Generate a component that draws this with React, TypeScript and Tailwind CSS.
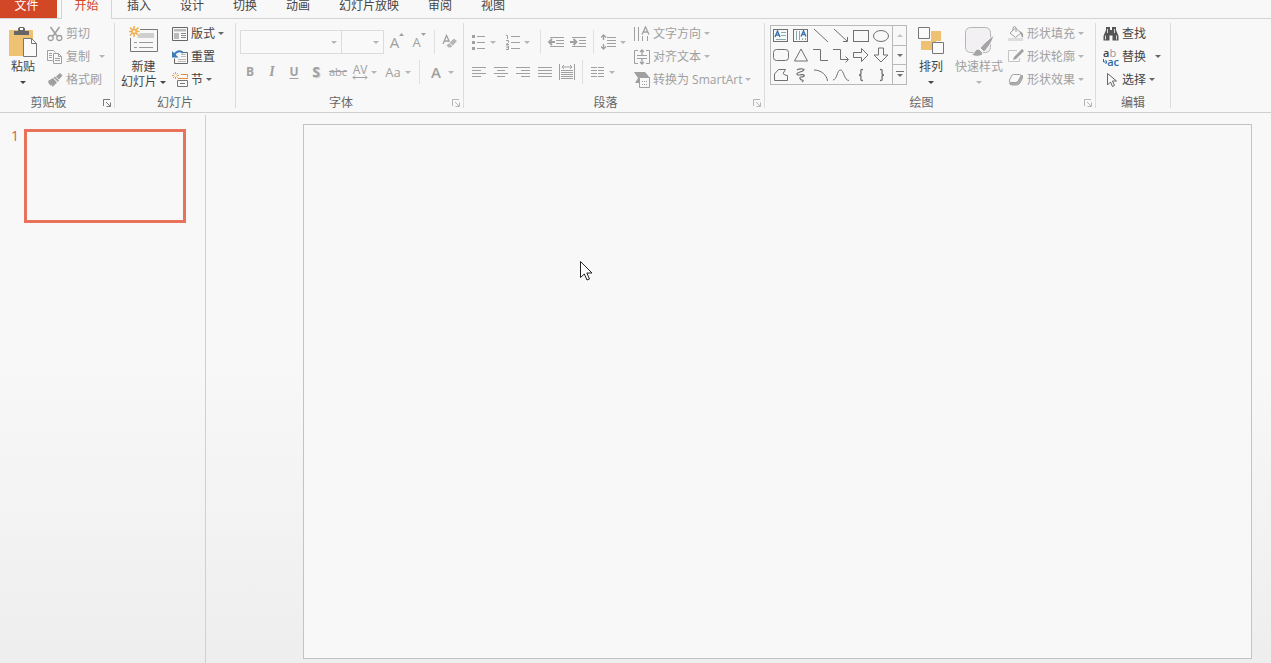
import type { ReactNode } from "react";

const tabs = ["插入", "设计", "切换", "动画", "幻灯片放映", "审阅", "视图"];

type IconProps = { w?: number; h?: number; children: ReactNode };

function Icon({ w = 16, h = 16, children }: IconProps) {
    return (
        <svg
            width={w}
            height={h}
            viewBox={`0 0 ${w} ${h}`}
            fill="none"
            stroke="currentColor"
            className="shrink-0"
            aria-hidden="true"
        >
            {children}
        </svg>
    );
}

function Caret() {
    return (
        <svg width="6" height="3" viewBox="0 0 6 3" className="shrink-0" fill="currentColor" aria-hidden="true">
            <path d="M0 0h6L3 3z" />
        </svg>
    );
}

function Separator() {
    return <div className="mx-1 h-6 w-px bg-[#e0e0e0]" />;
}

/* Ribbon group: controls on top, caption underneath, divider on the right */
function Group({ label, className, launcher, dim, children }: {
    label: string;
    className: string;
    launcher?: boolean;
    dim?: boolean;
    children: ReactNode;
}) {
    return (
        <section aria-label={label} className={`flex shrink-0 ${className}`}>
            <div className="flex min-w-0 flex-1 flex-col pt-[3px]">
                <div className="flex h-[69px] items-start">{children}</div>
                <div className="flex h-5 items-center text-[#666]">
                    <span className={`flex-1 pt-1 text-center ${launcher ? "pr-1.5" : ""}`}>{label}</span>
                    {launcher && (
                        <button aria-label={`${label}设置`} className={`mr-[3px] pt-1 ${dim ? "text-[#b5b5b5]" : "text-[#777]"}`}>
                            <Icon w={8} h={8}>
                                <path d="M.5 7V.5H7M3 3l4 4M7.5 3.5v4h-4" />
                            </Icon>
                        </button>
                    )}
                </div>
            </div>
            <div className="my-1 w-px bg-[#dcdcdc]" />
        </section>
    );
}

function SmallButton({ icon, label, caret, dim, split }: {
    icon: ReactNode;
    label: string;
    caret?: boolean;
    dim?: boolean;
    split?: boolean;
}) {
    return (
        <button className={`flex h-[23px] items-center gap-[3px] whitespace-nowrap ${dim ? "text-[#a0a0a0]" : "text-[#444]"}`}>
            {icon}
            <span>{label}</span>
            {caret && (
                <span className={`${split ? "pl-1.5" : ""} ${dim ? "text-[#b5b5b5]" : "text-[#666]"}`}>
                    <Caret />
                </span>
            )}
        </button>
    );
}

function BigButton({ icon, label, second, dim, className }: {
    icon: ReactNode;
    label: string;
    second?: string;
    dim?: boolean;
    className: string;
}) {
    return (
        <button className={`flex shrink-0 flex-col items-center pt-1 ${dim ? "text-[#a0a0a0]" : "text-[#444]"} ${className}`}>
            <span className="flex h-[33px] items-start">{icon}</span>
            <span className="leading-4 whitespace-nowrap">{label}</span>
            <span className={`flex h-3.5 items-center gap-[3px] leading-[14px] whitespace-nowrap ${dim ? "text-[#b5b5b5]" : ""}`}>
                {second}
                <Caret />
            </span>
        </button>
    );
}

function ToolButton({ label, caret, wide, children }: {
    label: string;
    caret?: boolean;
    wide?: boolean;
    children: ReactNode;
}) {
    return (
        <button aria-label={label} className="flex h-6 items-center text-[#a0a0a0]">
            <span className={`flex justify-center ${wide ? "w-6" : "w-[22px]"}`}>{children}</span>
            {caret && (
                <span className="flex w-2.5 text-[#b5b5b5]">
                    <Caret />
                </span>
            )}
        </button>
    );
}

function Combo({ label, className }: { label: string; className: string }) {
    return (
        <div className={`relative h-6 ${className}`}>
            <select aria-label={label} className="h-full w-full appearance-none border border-[#dcdcdc] bg-[#f9f9f9]">
                <option></option>
            </select>
            <span className="pointer-events-none absolute top-2.5 right-[5px] flex h-1 items-center text-[#b5b5b5]">
                <Caret />
            </span>
        </div>
    );
}

const star = "M5 0v3M5 7v3M0 5h3M7 5h3M1.5 1.5l2 2M6.5 6.5l2 2M8.5 1.5l-2 2M3.5 6.5l-2 2";

const PasteIcon = (
    <Icon w={30} h={32}>
        <rect x="1" y="4" width="24" height="26" fill="#eec272" stroke="none" />
        <path d="M6 9V5h4V2.5L11.500 1h4L17 2.500V5h4v4z" fill="#666" stroke="none" />
        <rect x="12" y="2" width="3" height="2" fill="#fff" stroke="none" />
        <path d="M15.500 12.500h8l5 5v13h-13z" fill="#fafafa" stroke="#777" />
        <path d="M23.500 12.500v5h5" stroke="#777" />
    </Icon>
);
const CutIcon = (
    <Icon>
        <path d="M3.500 1l6.500 9M12.500 1L6 10" strokeWidth="1.600" />
        <circle cx="3.700" cy="12" r="2.500" strokeWidth="1.300" />
        <circle cx="12.300" cy="12" r="2.500" strokeWidth="1.300" />
    </Icon>
);
const CopyIcon = (
    <Icon>
        <path d="M5.500 11.500h-5v-10h6l2 2" />
        <path d="M6.500 4.500h5l3 3v7h-8zM11.500 4.500v3h3M2 4.500h3M2 6.500h3M2 8.500h3M8 9.500h5M8 11.500h5" />
    </Icon>
);
const PainterIcon = (
    <Icon>
        <g fill="currentColor" stroke="none">
            <path d="M13 1l2.500 2.500-3.500 4-3-3z" />
            <path d="M8 4.500l4 4-1 1.500-4.500-4.500z" />
            <path d="M6 6l4 4.500L5.500 15l-.5-2-1.500 1-.5-2-1 .5L1 9z" />
        </g>
    </Icon>
);
const NewSlideIcon = (
    <Icon w={30} h={28}>
        <path d="M11 3.500h17.500v22h-27V12" stroke="#777" />
        <path d="M11 7h14v5H8z" fill="#cfcfcf" stroke="none" />
        <path d="M5 16.500h3M10 16.500h14M5 21.500h3M10 21.500h14" stroke="#999" />
        <g stroke="#f0b050" strokeWidth="1.600">
            <path d="M5 0v3M5 8v3M0 5.500h3M7.500 5.500h3M1 1.500l2.500 2.500M7 7l2.500 2.500M9.500 1.500L7 4M3.500 7L1 9.500" />
            <circle cx="5.200" cy="5.500" r="2" />
        </g>
    </Icon>
);
const LayoutIcon = (
    <Icon>
        <path d="M.5 1.500h15v13H.5z" stroke="#666" />
        <path d="M2 3h12v2.500H2zM2 7h5v6H2z" fill="#bbb" stroke="none" />
        <path d="M9 7.500h5M9 9.500h5M9 11.500h5" stroke="#888" />
    </Icon>
);
const ResetIcon = (
    <Icon>
        <path d="M11 3.500h4.500v11h-13v-5" stroke="#666" />
        <path d="M9 5.500h5M9 7.500h5M6 10.500h8M6 12.500h8" stroke="#bbb" />
        <path d="M2 6.500c1.500-4 6-6 9-2.500" stroke="#3b7bb8" strokeWidth="2" />
        <path d="M0 2v6.500h6.500z" fill="#3b7bb8" stroke="none" />
    </Icon>
);
const SectionIcon = (
    <Icon>
        <g transform="scale(.7)" stroke="#eda04a" strokeWidth="1.400">
            <path d={star} />
        </g>
        <path d="M9 2.500h6.500v3M6 6.500h10" stroke="#e98a3a" />
        <path d="M5.500 8.500h10v6h-10zM8 11.500h5" stroke="#777" />
    </Icon>
);
const ClearIcon = (
    <Icon>
        <path d="M1 10L4.500 1.500 8 9M2.500 7h4" strokeWidth="1.300" />
        <path d="M12 4l3.500 3-6.500 7H6.500L4 11.500z" fill="#b5b5b5" stroke="#f8f8f8" />
        <path d="M7 8.500l3.500 3.500" stroke="#f8f8f8" />
    </Icon>
);
const BulletsIcon = (
    <Icon>
        <path d="M6 2.500h8M6 8.500h8M6 14.500h8" />
        <path d="M1 1h3v3H1zM1 7h3v3H1zM1 13h3v3H1z" fill="currentColor" stroke="none" />
    </Icon>
);
const NumbersIcon = (
    <Icon>
        <path d="M6 2.500h9M6 8.500h9M6 14.500h9" />
        <path d="M1 1.500h1.500V5M1 6.500h2.500v2L1 10.500h3M1 12h2.500v3.500H1M1.500 13.700h2" />
    </Icon>
);
const OutdentIcon = (
    <Icon w={18} h={14}>
        <path d="M3 2.500h14M9 5.500h8M9 8.500h8M3 11.500h14" />
        <path d="M2 7h6M5 4L2 7l3 3" strokeWidth="1.800" />
    </Icon>
);
const IndentIcon = (
    <Icon w={18} h={14}>
        <path d="M3 2.500h14M10 5.500h7M10 8.500h7M3 11.500h14" />
        <path d="M1 7h6M4.500 4l3 3-3 3" strokeWidth="1.800" />
    </Icon>
);
const SpacingIcon = (
    <Icon>
        <path d="M6 3.500h9M6 6.500h9M6 9.500h9M6 12.500h9" />
        <path d="M2.500 1v5M0 3.500L2.500 1 5 3.500M2.500 10v5M0 12.500L2.500 15 5 12.500" strokeWidth="1.400" />
    </Icon>
);

const aligns = [
    { label: "左对齐", d: "M1 2.500h14M1 5.500h9M1 8.500h14M1 11.500h9" },
    { label: "居中", d: "M1 2.500h14M4 5.500h8M1 8.500h14M4 11.500h8" },
    { label: "右对齐", d: "M1 2.500h14M6 5.500h9M1 8.500h14M6 11.500h9" },
    { label: "两端对齐", d: "M1 2.500h14M1 5.500h14M1 8.500h14M1 11.500h14" },
];

const DistributeIcon = (
    <Icon>
        <path d="M.5 0v16M15.500 0v16M2 6.500h12M2 8.500h12M2 10.500h12M2 12.500h12M2 14.500h12" />
        <path d="M3 3h10M5 1L3 3l2 2M11 1l2 2-2 2" />
    </Icon>
);
const ColumnsIcon = (
    <Icon w={16} h={14}>
        <path d="M1 2.500h6M1 5.500h6M1 8.500h6M1 11.500h6M8 2.500h6M8 5.500h6M8 8.500h6M8 11.500h6" />
    </Icon>
);
const DirectionIcon = (
    <Icon>
        <path d="M.5 1v14M4.500 1v14M8.500 10v5M13.500 10v5" />
        <path d="M8 8.500L11.500 1 15 8.500M9.500 6h4" strokeWidth="1.300" />
    </Icon>
);
const AlignTextIcon = (
    <Icon>
        <path d="M4 1.500H.5v13H4M12 1.500h3.500v13H12M3 6.500h10M3 9.500h10" />
        <path d="M8 1v5M6 3l2-2 2 2M8 10v5M6 13l2 2 2-2" strokeWidth="1.300" />
    </Icon>
);
const SmartArtIcon = (
    <Icon>
        <path d="M0 0h11l4 4.500-1 1H5V11H1l3-5z" fill="currentColor" stroke="none" />
        <path d="M5.500 5.500h10v10h-10zM8 9.500h1M10 9.500h1M12 9.500h1M8 12.500h1M10 12.500h1M12 12.500h1" fill="#f8f8f8" />
    </Icon>
);

const shapes = [
    { label: "文本框", art: <><rect x="1.500" y="2.500" width="14" height="12" /><path d="M3 10l2.500-6L8 10M4 8h3" stroke="#3f76ad" strokeWidth="1.400" /><path d="M9 5.500h5M9 8.500h5M4 12.500h10" stroke="#8aa" /></> },
    { label: "竖排文本框", art: <><rect x="1.500" y="2.500" width="14" height="12" /><path d="M9 9.500L11.500 4 14 9.500M10 7.500h3" stroke="#3f76ad" strokeWidth="1.400" /><path d="M4.500 4v9M7.500 4v9M10.500 11v2M13.500 11v2" stroke="#8aa" /></> },
    { label: "直线", art: <path d="M2 2l14 13" /> },
    { label: "箭头", art: <path d="M2 2l13 12M15.500 10v4.500H11" /> },
    { label: "矩形", art: <rect x="1.500" y="3.500" width="15" height="11" /> },
    { label: "椭圆", art: <ellipse cx="9" cy="9" rx="7.500" ry="5.500" /> },
    { label: "圆角矩形", art: <rect x="1.500" y="3.500" width="15" height="11" rx="3" /> },
    { label: "三角形", art: <path d="M9 3l6.500 12h-13z" /> },
    { label: "肘形连接符", art: <path d="M1 3.500h7.500v11H16" /> },
    { label: "肘形箭头", art: <path d="M1 3.500h7.500v10H16M13.500 10.500l3 3-3 3" /> },
    { label: "右箭头", art: <path d="M1.500 6.500h8v-4L16 9l-6.500 6.500v-4h-8z" /> },
    { label: "下箭头", art: <path d="M6.500 2h5v7h4.500L9 16 2 9h4.500z" /> },
    { label: "任意多边形", art: <path d="M6.500 3.500h7l-2.500 4 2 1.500 2.500.5v5h-13V8z" /> },
    { label: "自由曲线", art: <path d="M5 4c3-2 4-1 6-1s1 2-3 3-4 3-1 3 4-1 5 0-1 2-3 2-1 3 1 3 1 1 0 2" strokeWidth="1.200" /> },
    { label: "弧形", art: <path d="M2 4c7 0 13 5 13.500 11" /> },
    { label: "曲线", art: <path d="M1 14c4 0 4-10 7.500-10S12 14.500 17 14.500" /> },
    { label: "左大括号", art: <path d="M11 3.500c-3 0-2 1-2 3.500 0 1-.5 2-2 2 1.500 0 2 1 2 2 0 2.500-1 3.500 2 3.500" strokeWidth="1.300" /> },
    { label: "右大括号", art: <path d="M8 3.500c3 0 2 1 2 3.500 0 1 .5 2 2 2-1.500 0-2 1-2 2 0 2.500 1 3.500-2 3.500" strokeWidth="1.300" /> },
];

const ArrangeIcon = (
    <Icon w={28} h={30}>
        <path d="M14 5h10v10h-5v9H4v-9h10z" fill="#eec272" stroke="none" />
        <path d="M1.500 1.500h11v11h-11zM15.500 16.500h11v11h-11z" fill="#fafafa" stroke="#777" />
    </Icon>
);
const StylesIcon = (
    <Icon w={30} h={32}>
        <rect x="1.500" y="1.500" width="25" height="25" rx="5" fill="#f2f0f3" stroke="#b5b5b5" />
        <path d="M30 9c-5 4-11 9-14 13l4 4c5-5 9-12 10-17z" fill="#a5a5a5" stroke="#f8f8f8" />
        <path d="M15 23l4 4c-1 4-7 4-12 2 4-1 3-6 8-6z" fill="#a5a5a5" stroke="#f8f8f8" />
    </Icon>
);
const FillIcon = (
    <Icon>
        <path d="M2 7L7.500 2l5.500 5-5.500 4.500zM5 4.500V1.500Q6.500-.5 8 1.500V6" />
        <path d="M12 5q4 2 3 6-1 1-1.500-.5z" fill="currentColor" stroke="none" />
        <path d="M0 13.500h15" stroke="#ddd" strokeWidth="3" />
    </Icon>
);
const OutlineIcon = (
    <Icon>
        <path d="M11.500 9v3.500H.5v-11H9" stroke="#c4c4c4" />
        <path d="M14 0l2 2-8 8-3 1 1-3z" fill="currentColor" stroke="none" />
    </Icon>
);
const EffectsIcon = (
    <Icon>
        <path d="M5.500 2.500h6q2 0 1 2l-2 4q-1 2-3 2H3q-2.500 0-1.500-2.500l1.500-3q.5-2.500 2.500-2.500z" />
        <path d="M14 3q1 2 0 4l-2 4q-1 2-4 2H4q-2 0-2.500-2H7q3 0 4-3z" fill="#b0b0b0" />
    </Icon>
);
const FindIcon = (
    <Icon>
        <path d="M3 1h4v3h2V1h4v3l2.500 6v4.500h-6v-5h-3v5h-6V10L3 4z" fill="#555" stroke="none" />
        <path d="M2.500 9.500v4M4.500 3v4M11.500 3v4M13.500 9.500v4" stroke="#d8d8d8" />
    </Icon>
);
const ReplaceIcon = (
    <span className="flex w-4 shrink-0 flex-col text-left text-[11px] leading-[9px] font-semibold" aria-hidden="true">
        <span>a<span className="font-normal text-[#999]">b</span></span>
        <span className="flex items-center justify-end text-[#2f6cab]">
            <svg width="4" height="5" viewBox="0 0 4 5" fill="none" stroke="currentColor" className="shrink-0">
                <path d="M.5 0v3H4M2.500 1L4 3 2.500 5" />
            </svg>
            <span>ac</span>
        </span>
    </span>
);
const SelectIcon = (
    <Icon>
        <path d="M4.500 1.500v11.500l3-3 2 4.500 2-1-2-4.500h4z" stroke="#666" />
    </Icon>
);

function Ribbon() {
    return (
        <div className="flex h-[94px] border-b border-[#cfcfcf] text-xs leading-4">
            <Group label="剪贴板" launcher className="w-[115px]">
                <BigButton icon={PasteIcon} label="粘贴" className="w-[46px]" />
                <div className="flex flex-col pl-px">
                    <SmallButton icon={CutIcon} label="剪切" dim />
                    <SmallButton icon={CopyIcon} label="复制" dim caret split />
                    <SmallButton icon={PainterIcon} label="格式刷" dim />
                </div>
            </Group>

            <Group label="幻灯片" className="w-[121px]">
                <BigButton icon={NewSlideIcon} label="新建" second="幻灯片" className="w-[57px]" />
                <div className="flex flex-col">
                    <SmallButton icon={LayoutIcon} label="版式" caret />
                    <SmallButton icon={ResetIcon} label="重置" />
                    <SmallButton icon={SectionIcon} label="节" caret />
                </div>
            </Group>

            <Group label="字体" launcher dim className="w-[228px]">
                <div className="flex flex-col gap-1.5 pt-2 pl-[3px]">
                    <div className="flex items-center pl-px">
                        <Combo label="字体名称" className="w-[102px]" />
                        <Combo label="字号" className="-ml-px w-[43px]" />
                        <div className="w-0.5" />
                        <ToolButton label="增大字号">
                            <span className="text-[15px] leading-6">A</span>
                            <Icon w={5} h={12}><path d="M0 6l2.500-3L5 6z" fill="currentColor" stroke="none" /></Icon>
                        </ToolButton>
                        <ToolButton label="减小字号">
                            <span className="text-[13px] leading-6">A</span>
                            <Icon w={5} h={12}><path d="M0 3h5L2.500 6z" fill="currentColor" stroke="none" /></Icon>
                        </ToolButton>
                        <Separator />
                        <ToolButton label="清除格式">{ClearIcon}</ToolButton>
                    </div>
                    <div className="flex items-center">
                        <ToolButton label="加粗"><b>B</b></ToolButton>
                        <ToolButton label="倾斜"><i className="font-['Liberation_Serif',serif] text-sm font-bold">I</i></ToolButton>
                        <ToolButton label="下划线"><b className="underline underline-offset-2">U</b></ToolButton>
                        <ToolButton label="阴影"><b className="text-sm [text-shadow:1px_1px_1px_#ccc]">S</b></ToolButton>
                        <ToolButton label="删除线"><span className="text-[11px] line-through">abc</span></ToolButton>
                        <ToolButton label="字符间距" caret>
                            <span className="flex flex-col items-center">
                                <span className="leading-[10px]">AV</span>
                                <Icon w={16} h={5}><path d="M1 2.500h14M3 .5l-2 2 2 2M13 .5l2 2-2 2" /></Icon>
                            </span>
                        </ToolButton>
                        <ToolButton label="更改大小写" caret wide><span className="text-[13px]">Aa</span></ToolButton>
                        <Separator />
                        <ToolButton label="字体颜色" caret wide><span className="text-[15px] font-semibold">A</span></ToolButton>
                    </div>
                </div>
            </Group>

            <Group label="段落" launcher dim className="w-[301px]">
                <div className="flex flex-col gap-1.5 pt-2 pl-1">
                    <div className="flex items-center">
                        <ToolButton label="项目符号" caret>{BulletsIcon}</ToolButton>
                        <div className="w-0.5" />
                        <ToolButton label="编号" caret>{NumbersIcon}</ToolButton>
                        <div className="w-0.5" />
                        <Separator />
                        <ToolButton label="降低列表级别">{OutdentIcon}</ToolButton>
                        <ToolButton label="提高列表级别">{IndentIcon}</ToolButton>
                        <Separator />
                        <ToolButton label="行距" caret>{SpacingIcon}</ToolButton>
                    </div>
                    <div className="flex items-center">
                        {aligns.map((a) => (
                            <ToolButton key={a.label} label={a.label}>
                                <Icon w={16} h={14}><path d={a.d} /></Icon>
                            </ToolButton>
                        ))}
                        <ToolButton label="分散对齐">{DistributeIcon}</ToolButton>
                        <Separator />
                        <ToolButton label="分栏" caret>{ColumnsIcon}</ToolButton>
                    </div>
                </div>
                <div className="flex flex-col pl-1">
                    <SmallButton icon={DirectionIcon} label="文字方向" dim caret />
                    <SmallButton icon={AlignTextIcon} label="对齐文本" dim caret />
                    <SmallButton icon={SmartArtIcon} label="转换为 SmartArt" dim caret />
                </div>
            </Group>

            <Group label="绘图" launcher dim className="w-[331px]">
                <div className="mt-[3px] ml-[5px] flex h-[60px] border border-[#b9b9b9] text-[#707070]">
                    <div className="ml-px grid grid-cols-[repeat(6,20px)] content-between">
                        {shapes.map((s) => (
                            <button key={s.label} aria-label={s.label} className="flex h-[19px] items-center">
                                <Icon w={19} h={18}>{s.art}</Icon>
                            </button>
                        ))}
                    </div>
                    <div className="flex w-3.5 flex-col divide-y divide-[#b9b9b9] border-l border-[#b9b9b9]">
                        <button aria-label="上一行" className="flex flex-1 items-center justify-center text-[#c4c4c4]">
                            <Icon w={6} h={3}><path d="M0 3h6L3 0z" fill="currentColor" stroke="none" /></Icon>
                        </button>
                        <button aria-label="下一行" className="flex flex-1 items-center justify-center">
                            <Caret />
                        </button>
                        <button aria-label="其他形状" className="flex flex-1 items-center justify-center">
                            <Icon w={8} h={7}>
                                <path d="M0 .5h8" />
                                <path d="M1 3h6L4 6z" fill="currentColor" stroke="none" />
                            </Icon>
                        </button>
                    </div>
                </div>
                <BigButton icon={ArrangeIcon} label="排列" className="w-12" />
                <BigButton icon={StylesIcon} label="快速样式" dim className="w-12" />
                <div className="flex flex-col pl-[5px]">
                    <SmallButton icon={FillIcon} label="形状填充" dim caret />
                    <SmallButton icon={OutlineIcon} label="形状轮廓" dim caret />
                    <SmallButton icon={EffectsIcon} label="形状效果" dim caret />
                </div>
            </Group>

            <Group label="编辑" className="w-[75px]">
                <div className="flex flex-col pl-[7px]">
                    <SmallButton icon={FindIcon} label="查找" />
                    <SmallButton icon={ReplaceIcon} label="替换" caret split />
                    <SmallButton icon={SelectIcon} label="选择" caret />
                </div>
            </Group>
        </div>
    );
}

export default function App() {
    return (
        <div className="flex min-h-screen flex-col overflow-hidden bg-[#f8f8f8] font-['Open_Sans','Noto_Sans_CJK_SC',sans-serif]">
            <nav className="flex h-[19px] border-b border-[#d4d4d4] text-xs leading-3 text-[#444]">
                <button className="flex w-[57px] items-start justify-center bg-[#d24726] pr-1 text-white">文件</button>
                <button className="-mb-px ml-1 flex w-[51px] items-start justify-center border-x border-[#d4d4d4] bg-[#f8f8f8] text-[#d24726]">
                    开始
                </button>
                {tabs.map((t) => (
                    <button key={t} className="flex items-start pr-3.5 pl-[15px] whitespace-nowrap">{t}</button>
                ))}
            </nav>

            <Ribbon />

            <main className="flex flex-1 bg-linear-to-b from-[#f8f8f8] from-45% to-[#eeeeee]">
                {/* Slide thumbnails */}
                <aside className="mt-0.5 flex w-[206px] shrink-0 items-start border-r border-[#d0d0d0] pt-3.5">
                    <span className="w-6 pl-[11px] text-sm leading-3.5 text-[#d0604c]">1</span>
                    <button aria-label="幻灯片 1" className="h-[94px] w-[162px] border-3 border-[#e8735a] bg-[#f8f8f8]" />
                </aside>

                {/* Editing canvas */}
                <div className="relative mt-[11px] mr-[19px] mb-1 ml-[97px] flex-1 border border-[#c3c3c3] bg-[#f8f8f8]">
                    <svg className="absolute top-34 left-69" width="14" height="20" viewBox="0 0 14 20" aria-hidden="true">
                        <path d="M.5.500v16l3.800-3.500 2.700 6 2.500-1-2.700-6h5.200z" fill="#fff" stroke="#222" />
                    </svg>
                </div>
            </main>
        </div>
    );
}
